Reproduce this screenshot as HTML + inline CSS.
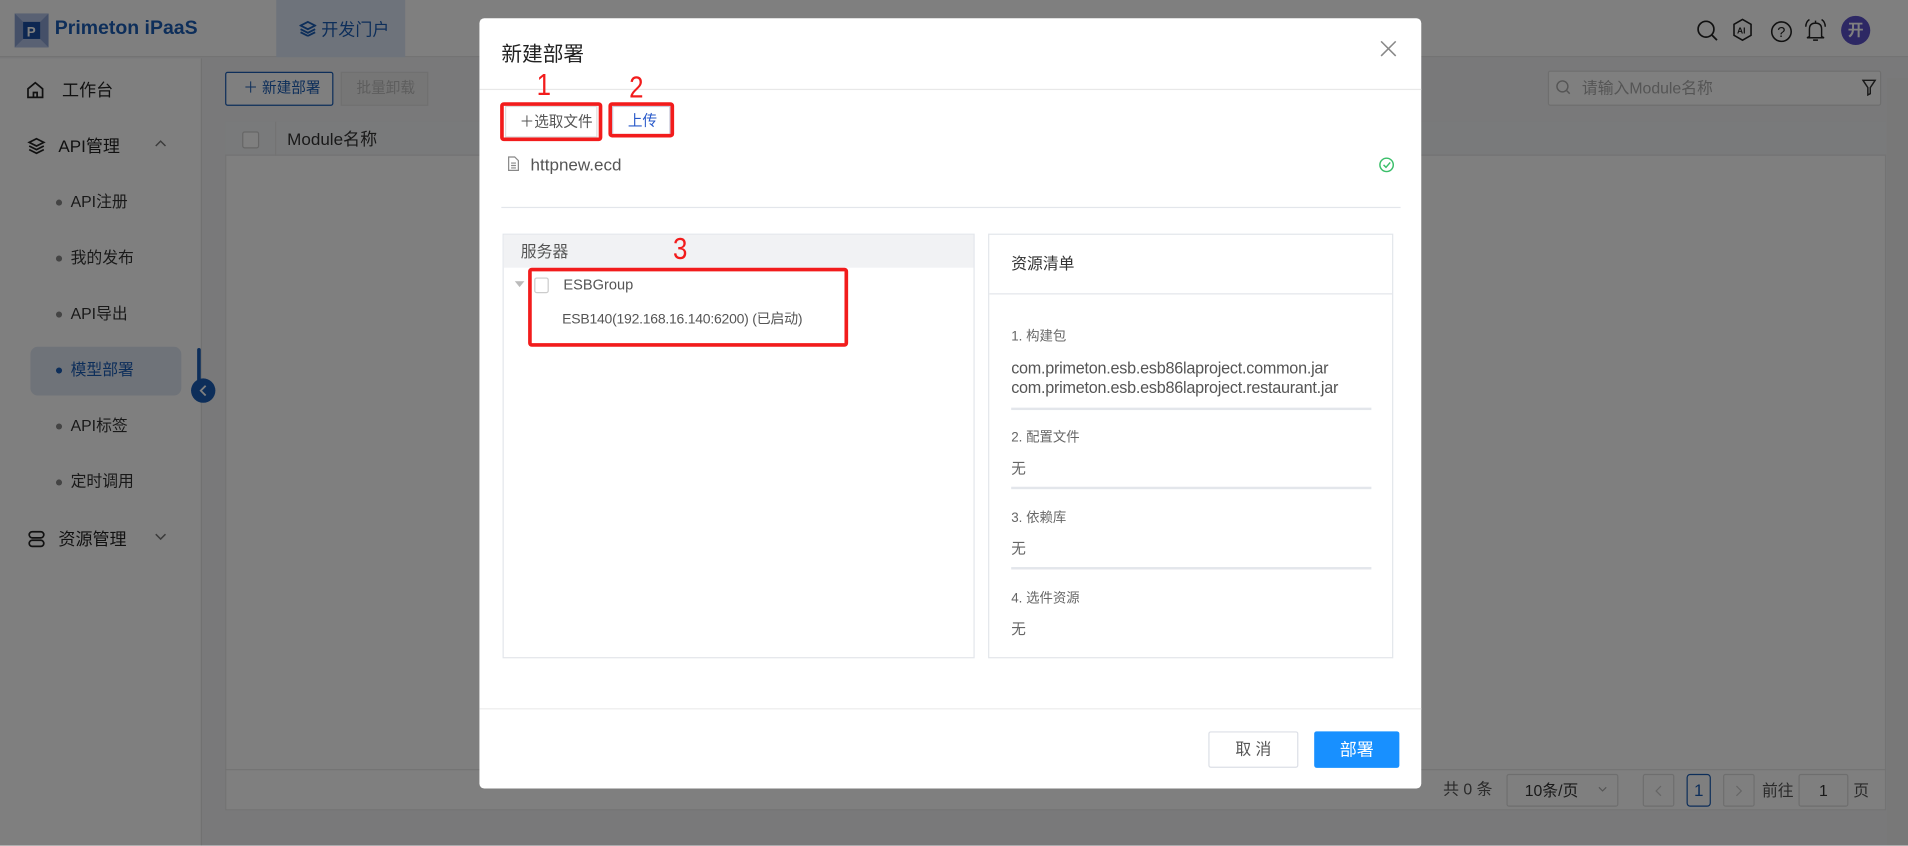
<!DOCTYPE html>
<html><head><meta charset="utf-8"><style>
*{box-sizing:border-box;margin:0;padding:0}
html,body{width:1908px;height:846px;overflow:hidden;background:#fff}
body{font-family:"Liberation Sans","Noto Sans CJK SC",sans-serif;color:#333}
#w{position:absolute;left:0;top:0;width:1568px;height:695px;transform:scale(1.21684);transform-origin:0 0;background:#f2f3f5;overflow:hidden}
.a{position:absolute}
.t{position:absolute;white-space:nowrap;line-height:1}
#ov{position:absolute;left:0;top:0;width:1568px;height:695px;background:rgba(0,0,0,.5)}
.menu{font-size:14px;color:#222}
.dot{position:absolute;width:5px;height:5px;border-radius:50%;background:#888}
.red{position:absolute;border:3px solid #f21c1c;border-radius:3px}
.num{position:absolute;color:#f21c1c;font-size:25px;line-height:1;font-family:"Liberation Sans",sans-serif;transform:scaleX(.85)}
.ln{position:absolute;height:1px;background:#e3e6eb}
</style></head><body><div id="w">
<div class="a" style="left:0;top:0;width:1568px;height:47px;background:#fff;border-bottom:1px solid #e6e6e6"></div>
<svg class="a" style="left:12px;top:11px" width="28" height="28" viewBox="0 0 28 28"><rect width="28" height="28" fill="#8aa0d0"/><polygon points="0,0 28,0 21,7 7,7" fill="#b3c3e6"/><polygon points="0,28 28,28 21,21 7,21" fill="#b3c3e6"/><rect x="7" y="7" width="14" height="14" fill="#1a4fa5"/><text x="10" y="19" font-size="11" font-weight="bold" fill="#fff" font-family="Liberation Sans">P</text></svg>
<div class="t" style="left:45px;top:16px;font-size:16px;font-weight:bold;color:#1b5db5">Primeton iPaaS</div>
<div class="a" style="left:227px;top:0;width:106px;height:47px;background:#dde7f6"></div>
<svg class="a" style="left:246px;top:17px" width="14" height="13" viewBox="0 0 14 13"><path d="M7 1 L13 4 L7 7 L1 4Z M1 7 L7 10 L13 7 M1 9.5 L7 12.5 L13 9.5" fill="none" stroke="#1b5db5" stroke-width="1.5"/></svg>
<div class="t" style="left:264px;top:17px;font-size:14px;color:#1b5db5">开发门户</div>
<svg class="a" style="left:1394px;top:16px" width="20" height="20" viewBox="0 0 20 20"><circle cx="8" cy="8" r="6.5" fill="none" stroke="#222" stroke-width="1.4"/><path d="M13 13 L17 17" stroke="#222" stroke-width="1.5"/></svg>
<svg class="a" style="left:1422px;top:14px" width="20" height="22" viewBox="0 0 20 22"><path d="M10 2 L17 6 L17 15 L10 19 L3 15 L3 6Z" fill="none" stroke="#222" stroke-width="1.3"/><text x="5.5" y="13.5" font-size="7" font-weight="bold" fill="#222" font-family="Liberation Sans">AI</text></svg>
<svg class="a" style="left:1454px;top:16px" width="20" height="20" viewBox="0 0 20 20"><circle cx="10" cy="10" r="8" fill="none" stroke="#222" stroke-width="1.3"/><text x="6.5" y="14.5" font-size="12" fill="#222" font-family="Liberation Sans">?</text></svg>
<svg class="a" style="left:1482px;top:14px" width="20" height="22" viewBox="0 0 20 22"><path d="M5 16 L5 10 Q5 5 10 5 Q15 5 15 10 L15 16 L17 17 L3 17 L5 16Z M8 19 L12 19 M10 3 L10 5 M2 8 Q2 4 5 2 M18 8 Q18 4 15 2" fill="none" stroke="#222" stroke-width="1.2"/></svg>
<div class="a" style="left:1513px;top:13px;width:24px;height:24px;border-radius:50%;background:#5b50c8;color:#fff;font-size:13px;font-weight:bold;text-align:center;line-height:24px">开</div>
<div class="a" style="left:0;top:48px;width:166px;height:647px;background:#fff;border-right:1px solid #e3e3e3"></div>
<svg class="a" style="left:21px;top:66px" width="16" height="16" viewBox="0 0 16 16"><path d="M2 7 L8 2 L14 7 L14 14 L2 14Z M6.5 14 L6.5 10 L9.5 10 L9.5 14" fill="none" stroke="#222" stroke-width="1.4"/></svg>
<div class="t menu" style="left:51px;top:67px">工作台</div>
<svg class="a" style="left:22px;top:112px" width="16" height="16" viewBox="0 0 16 16"><path d="M8 2 L14 5 L8 8 L2 5Z M2 8 L8 11 L14 8 M2 11 L8 14 L14 11" fill="none" stroke="#222" stroke-width="1.4"/></svg>
<div class="t menu" style="left:48px;top:113px">API管理</div>
<svg class="a" style="left:127px;top:114px" width="10" height="8"><path d="M1 6 L5 2 L9 6" fill="none" stroke="#777" stroke-width="1.2"/></svg>
<div class="dot" style="left:46px;top:164px"></div><div class="t" style="left:58px;top:159px;font-size:13px">API注册</div>
<div class="dot" style="left:46px;top:210px"></div><div class="t" style="left:58px;top:205px;font-size:13px">我的发布</div>
<div class="dot" style="left:46px;top:256px"></div><div class="t" style="left:58px;top:251px;font-size:13px">API导出</div>
<div class="a" style="border-radius:6px;background:#dfe6f2;top:285px;left:25px;width:124px;height:40px"></div>
<div class="dot" style="left:46px;top:302px;background:#1b5db5"></div><div class="t" style="left:58px;top:297px;font-size:13px;color:#1b5db5">模型部署</div>
<div class="dot" style="left:46px;top:348px"></div><div class="t" style="left:58px;top:343px;font-size:13px">API标签</div>
<div class="dot" style="left:46px;top:394px"></div><div class="t" style="left:58px;top:389px;font-size:13px">定时调用</div>
<svg class="a" style="left:22px;top:435px" width="16" height="16" viewBox="0 0 16 16"><rect x="2" y="2" width="12" height="5" rx="2.5" fill="none" stroke="#222" stroke-width="1.4"/><rect x="2" y="9" width="12" height="5" rx="2.5" fill="none" stroke="#222" stroke-width="1.4"/></svg>
<div class="t menu" style="left:48px;top:436px">资源管理</div>
<svg class="a" style="left:127px;top:437px" width="10" height="8"><path d="M1 2 L5 6 L9 2" fill="none" stroke="#777" stroke-width="1.2"/></svg>
<div class="a" style="left:162px;top:286px;width:3px;height:30px;background:#1b5db5;border-radius:2px"></div>
<div class="a" style="left:157px;top:311px;width:20px;height:20px;border-radius:50%;background:#1b5db5"></div>
<svg class="a" style="left:163px;top:316px" width="8" height="10"><path d="M6 1 L2 5 L6 9" fill="none" stroke="#fff" stroke-width="1.5"/></svg>
<div class="a" style="left:185px;top:59px;width:89px;height:28px;border:1px solid #1b5db5;border-radius:2px;background:#fff"></div>
<div class="t" style="left:200px;top:66px;font-size:12px;color:#1b5db5">＋ 新建部署</div>
<div class="a" style="left:280px;top:59px;width:72px;height:28px;background:#ececec;border:1px solid #e0e0e0"></div>
<div class="t" style="left:293px;top:66px;font-size:12px;color:#bbb">批量卸载</div>
<div class="a" style="left:1272px;top:58px;width:274px;height:29px;border:1px solid #ddd;background:#fff;border-radius:2px"></div>
<svg class="a" style="left:1278px;top:65px" width="14" height="14"><circle cx="6" cy="6" r="4.5" fill="none" stroke="#aaa" stroke-width="1.2"/><path d="M9.5 9.5 L12 12" stroke="#aaa" stroke-width="1.2"/></svg>
<div class="t" style="left:1300px;top:66px;font-size:13px;color:#aaa">请输入Module名称</div>
<svg class="a" style="left:1530px;top:65px" width="12" height="14"><path d="M1 1 L11 1 L7 7 L7 12 L5 13 L5 7Z" fill="none" stroke="#333" stroke-width="1.2"/></svg>
<div class="a" style="left:185px;top:100px;width:1365px;height:566px;background:#fff;border:1px solid #e6e6e6"></div>
<div class="a" style="left:185px;top:100px;width:1365px;height:28px;background:#f3f4f6;border-bottom:1px solid #e6e6e6"></div>
<div class="a" style="left:226px;top:100px;width:1px;height:28px;background:#e6e6e6"></div>
<div class="a" style="left:199px;top:108px;width:14px;height:14px;border:1px solid #ccc;border-radius:2px;background:#fff"></div>
<div class="t" style="left:236px;top:107px;font-size:14px">Module名称</div>
<div class="a" style="left:185px;top:632px;width:1365px;height:1px;background:#e6e6e6"></div>
<div class="t" style="left:1186px;top:642px;font-size:13px;color:#555">共 0 条</div>
<div class="a" style="left:1238px;top:636px;width:92px;height:27px;border:1px solid #ddd;background:#fff;border-radius:2px"></div>
<div class="t" style="left:1253px;top:643px;font-size:13px">10条/页</div>
<svg class="a" style="left:1313px;top:646px" width="8" height="6"><path d="M1 1 L4 4 L7 1" fill="none" stroke="#aaa"/></svg>
<div class="a" style="left:1350px;top:636px;width:26px;height:27px;border:1px solid #ddd;background:#fff;border-radius:2px"></div>
<svg class="a" style="left:1360px;top:645px" width="6" height="10"><path d="M5 1 L1 5 L5 9" fill="none" stroke="#ccc"/></svg>
<div class="a" style="left:1386px;top:636px;width:20px;height:27px;border:1px solid #1b5db5;background:#fff;border-radius:3px;color:#1b5db5;font-size:14px;text-align:center;line-height:25px">1</div>
<div class="a" style="left:1416px;top:636px;width:26px;height:27px;border:1px solid #ddd;background:#fff;border-radius:2px"></div>
<svg class="a" style="left:1426px;top:645px" width="6" height="10"><path d="M1 1 L5 5 L1 9" fill="none" stroke="#ccc"/></svg>
<div class="t" style="left:1448px;top:643px;font-size:13px;color:#555">前往</div>
<div class="a" style="left:1478px;top:636px;width:41px;height:27px;border:1px solid #ddd;background:#fff;border-radius:2px;text-align:center;line-height:25px;font-size:13px">1</div>
<div class="t" style="left:1523px;top:643px;font-size:13px;color:#555">页</div>
<div class="a" style="left:1551px;top:64px;width:17px;height:631px;background:#f0f0f0"></div>
<div id="ov"></div>
<div class="a" style="left:394px;top:15px;width:774px;height:633px;background:#fff;border-radius:4px"></div>
<div class="t" style="left:412px;top:36px;font-size:17px;color:#222">新建部署</div>
<svg class="a" style="left:1134px;top:33px" width="14" height="14"><path d="M1 1 L13 13 M13 1 L1 13" stroke="#888" stroke-width="1.3"/></svg>
<div class="ln" style="left:394px;top:73px;width:774px;background:#e8e8e8"></div>
<div class="num" style="left:440px;top:58px">1</div>
<div class="num" style="left:516px;top:60px">2</div>
<div class="a" style="left:415px;top:87px;width:76px;height:26px;border:1px solid #ddd;background:#fff"></div>
<div class="t" style="left:427px;top:94px;font-size:12px;color:#555">＋选取文件</div>
<div class="a" style="left:503px;top:87px;width:48px;height:24px;border:1px solid #ccd;background:#fff"></div>
<div class="t" style="left:516px;top:93px;font-size:12px;color:#2758c9">上传</div>
<div class="red" style="left:411px;top:84px;width:84px;height:32px"></div>
<div class="red" style="left:500px;top:84px;width:54px;height:29px"></div>
<svg class="a" style="left:417px;top:128px" width="10" height="13"><path d="M1 1 L6 1 L9 4 L9 12 L1 12Z M3 6 L7 6 M3 8 L7 8 M3 10 L7 10" fill="none" stroke="#888" stroke-width="1"/></svg>
<div class="t" style="left:436px;top:128px;font-size:14px;color:#555">httpnew.ecd</div>
<svg class="a" style="left:1133px;top:129px" width="13" height="13"><circle cx="6.5" cy="6.5" r="5.5" fill="none" stroke="#3bbf6a" stroke-width="1.2"/><path d="M4 6.5 L6 8.5 L9.5 4.5" fill="none" stroke="#3bbf6a" stroke-width="1.2"/></svg>
<div class="ln" style="left:412px;top:170px;width:739px"></div>
<div class="a" style="left:413px;top:192px;width:388px;height:349px;border:1px solid #e3e6eb"></div>
<div class="a" style="left:414px;top:193px;width:386px;height:27px;background:#f1f2f4"></div>
<div class="t" style="left:428px;top:200px;font-size:13px;color:#555">服务器</div>
<div class="num" style="left:552px;top:193px">3</div>
<svg class="a" style="left:423px;top:231px" width="8" height="6"><path d="M0 0 L8 0 L4 5Z" fill="#bbb"/></svg>
<div class="a" style="left:439px;top:228px;width:12px;height:13px;border:1px solid #ccc;border-radius:2px"></div>
<div class="t" style="left:463px;top:228px;font-size:12px;color:#555">ESBGroup</div>
<div class="t" style="left:462px;top:258px;font-size:11.5px;color:#555;letter-spacing:-0.2px">ESB140(192.168.16.140:6200) (已启动)</div>
<div class="red" style="left:434px;top:220px;width:263px;height:65px"></div>
<div class="a" style="left:812px;top:192px;width:333px;height:349px;border:1px solid #e3e6eb"></div>
<div class="ln" style="left:813px;top:241px;width:331px"></div>
<div class="t" style="left:831px;top:210px;font-size:13px;color:#333">资源清单</div>
<div class="t" style="left:831px;top:272px;font-size:11px;color:#666">1. 构建包</div>
<div class="t" style="left:831px;top:295px;font-size:13.3px;color:#555;line-height:16px;letter-spacing:-0.2px">com.primeton.esb.esb86laproject.common.jar<br>com.primeton.esb.esb86laproject.restaurant.jar</div>
<div class="ln" style="left:831px;top:335px;width:296px;height:1.5px"></div>
<div class="t" style="left:831px;top:355px;font-size:11px;color:#666">2. 配置文件</div>
<div class="t" style="left:831px;top:379px;font-size:12px;color:#666">无</div>
<div class="ln" style="left:831px;top:400px;width:296px;height:1.5px"></div>
<div class="t" style="left:831px;top:421px;font-size:11px;color:#666">3. 依赖库</div>
<div class="t" style="left:831px;top:445px;font-size:12px;color:#666">无</div>
<div class="ln" style="left:831px;top:466px;width:296px;height:1.5px"></div>
<div class="t" style="left:831px;top:487px;font-size:11px;color:#666">4. 选件资源</div>
<div class="t" style="left:831px;top:511px;font-size:12px;color:#666">无</div>
<div class="ln" style="left:394px;top:582px;width:774px;background:#ececec"></div>
<div class="a" style="left:993px;top:601px;width:74px;height:30px;border:1px solid #dcdfe6;border-radius:2px;font-size:13px;color:#555;text-align:center;line-height:28px">取 消</div>
<div class="a" style="left:1080px;top:601px;width:70px;height:30px;background:#1890ff;border-radius:2px;font-size:14px;color:#fff;text-align:center;line-height:30px">部署</div>
</div></body></html>
